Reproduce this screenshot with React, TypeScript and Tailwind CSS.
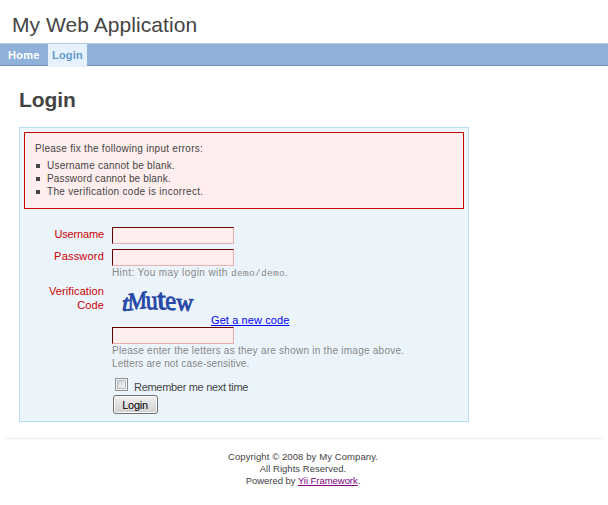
import React from "react";

const errors = [
  { text: "Username cannot be blank.", fit: "tracking-[0.23px]" },
  { text: "Password cannot be blank.", fit: "tracking-[0.15px]" },
  { text: "The verification code is incorrect.", fit: "tracking-[0.29px]" },
];

const captcha = [
  { ch: "t", w: 7, size: 23, at: "matrix(1 -0.1 -0.2 1 1 25)" },
  { ch: "M", w: 19, size: 25, at: "matrix(1 -0.14 -0.04 1 7.5 24.5)" },
  { ch: "u", w: 12, size: 27, at: "matrix(1 0.03 0.04 1 26 23)" },
  { ch: "t", w: 9, size: 29, at: "matrix(1 0.04 0.06 1 37.5 23)" },
  { ch: "e", w: 11, size: 28, at: "matrix(1 0.06 0.04 1 45.5 23.5)" },
  { ch: "w", w: 17, size: 25, at: "matrix(1 0.02 -0.04 1 56 24.5)" },
];

function ErrorInput({ type = "text", label }: { type?: string; label: string }) {
  return (
    <input
      type={type}
      aria-label={label}
      className="block h-[17px] w-[122px] border border-t-[#6b0000] border-r-[#f2adad] border-b-[#f2adad] border-l-[#6b0000] bg-[#ffeeee] px-1 text-[11px] outline-none"
    />
  );
}

function Label({ children, fit = "tracking-[0.15px]" }: { children: React.ReactNode; fit?: string }) {
  return (
    <div className="mr-2 w-[80px] shrink-0 text-right text-[11px] leading-[14px] text-[#cc0000]">
      <span className={fit}>{children}</span>
    </div>
  );
}

export default function App() {
  return (
    <div className="h-[505px] w-[608px] overflow-hidden bg-white font-['Liberation_Sans',Arial,sans-serif] text-[#444444]">
      <header className="h-[43px] pt-3 pl-3 text-[21px] leading-[26px] tracking-[0.06px] whitespace-nowrap">
        My Web Application
      </header>
      <nav className="flex h-[23px] border-t border-b border-t-[#b7cde3] border-b-[#7890b3] bg-[#8fb1da] pl-[3px] text-[11px] leading-[23px] font-bold">
        <a className="h-[21px] w-[45px] pl-[5px] tracking-[0.3px] text-white">Home</a>
        <a className="relative h-[23px] w-[39px] bg-[#e5f1fd] pl-1 tracking-[0.2px] text-[#6699cc]">Login</a>
      </nav>
      <main className="pl-[19px]">
        <h1 className="pt-[21px] pb-[14px] text-[21px] leading-[26px] font-bold tracking-[-0.1px]">Login</h1>
        <form
          className="h-[295px] w-[450px] border border-[#b7ddf2] bg-[#ebf4fb] p-1"
          onSubmit={(e) => e.preventDefault()}
        >
          <section className="h-[77px] w-[440px] border border-[#cc0000] bg-[#ffeeee] pt-[9px] pl-[10px] text-[10px] leading-[13px]">
            <p className="mb-1 tracking-[0.27px]">Please fix the following input errors:</p>
            <ul>
              {errors.map((e) => (
                <li key={e.text} className="flex h-[13px] items-center">
                  <span className="mt-px ml-px mr-[7px] size-1 bg-[#444444]" />
                  <span className={e.fit}>{e.text}</span>
                </li>
              ))}
            </ul>
          </section>

          <div className="mt-[18px] flex h-[22px]">
            <Label fit="tracking-[-0.15px]">Username</Label>
            <ErrorInput label="Username" />
          </div>
          <div className="flex h-[35px]">
            <Label fit="tracking-[0.2px]">Password</Label>
            <div>
              <ErrorInput type="password" label="Password" />
              <p className="text-[10px] leading-[13px] tracking-[0.4px] whitespace-nowrap text-[#888888]">
                Hint: You may login with{" "}
                <span className="font-['Liberation_Mono',monospace] text-[9.5px] tracking-[0.3px]">demo/demo</span>.
              </p>
            </div>
          </div>
          <div className="flex h-[93px]">
            <Label fit="tracking-[0.1px]">
              Verification
              <br />
              Code
            </Label>
            <div>
              <div className="flex h-[43px] items-end">
                <svg
                  width="99"
                  height="43"
                  viewBox="0 0 99 43"
                  className="overflow-visible"
                  role="img"
                  aria-label="Verification image"
                >
                  <g transform="translate(8 2)" fill="#2647a5" stroke="#2647a5" strokeWidth="0.9">
                    {captcha.map((c, i) => (
                      <text
                        key={i}
                        fontSize={c.size}
                        textLength={c.w}
                        lengthAdjust="spacingAndGlyphs"
                        transform={c.at}
                        className="font-['Liberation_Serif',serif]"
                      >
                        {c.ch}
                      </text>
                    ))}
                  </g>
                </svg>
                <a className="text-[11px] leading-[14px] tracking-[0.1px] whitespace-nowrap text-[#0000ff] underline">
                  Get a new code
                </a>
              </div>
              <ErrorInput label="Verification code" />
              <p className="text-[10px] leading-[13px] whitespace-nowrap text-[#888888]">
                <span className="tracking-[0.25px]">Please enter the letters as they are shown in the image above.</span>
                <br />
                <span className="tracking-[0.13px]">Letters are not case-sensitive.</span>
              </p>
            </div>
          </div>
          <div className="flex h-[18px] pl-[91px]">
            <span className="mt-[1px] flex size-[13px] items-center justify-center border border-[#8e8f8f] bg-[#f4f4f4]">
              <span className="size-[9px] border border-[#b8bdc4] bg-linear-to-br from-[#cfd3d8] to-[#f6f6f6]" />
            </span>
            <label className="ml-[6px] pt-[3px] text-[11px] leading-[14px] tracking-[-0.3px] whitespace-nowrap">
              Remember me next time
            </label>
          </div>
          <button
            type="submit"
            className="ml-[89px] flex h-[19px] w-[45px] items-center justify-center rounded-[3px] border border-[#707070] bg-linear-to-b from-[#f2f2f2] to-[#cfcfcf] pr-px text-[11px] leading-[17px] tracking-[-0.25px] text-black shadow-[inset_0_0_0_1px_#fcfcfc]"
          >
            <span className="pt-px">Login</span>
          </button>
        </form>
      </main>
      <footer className="mx-1 mt-4 border-t border-[#eeeeee] pt-[12px] text-center text-[9.5px] leading-3">
        <p className="pr-[2px] tracking-[0.09px]">Copyright © 2008 by My Company.</p>
        <p className="pr-[2px] tracking-[0.02px]">All Rights Reserved.</p>
        <p className="pr-[2px] tracking-[-0.04px]">
          Powered by <a className="text-[#800080] underline">Yii Framework</a>.
        </p>
      </footer>
    </div>
  );
}
